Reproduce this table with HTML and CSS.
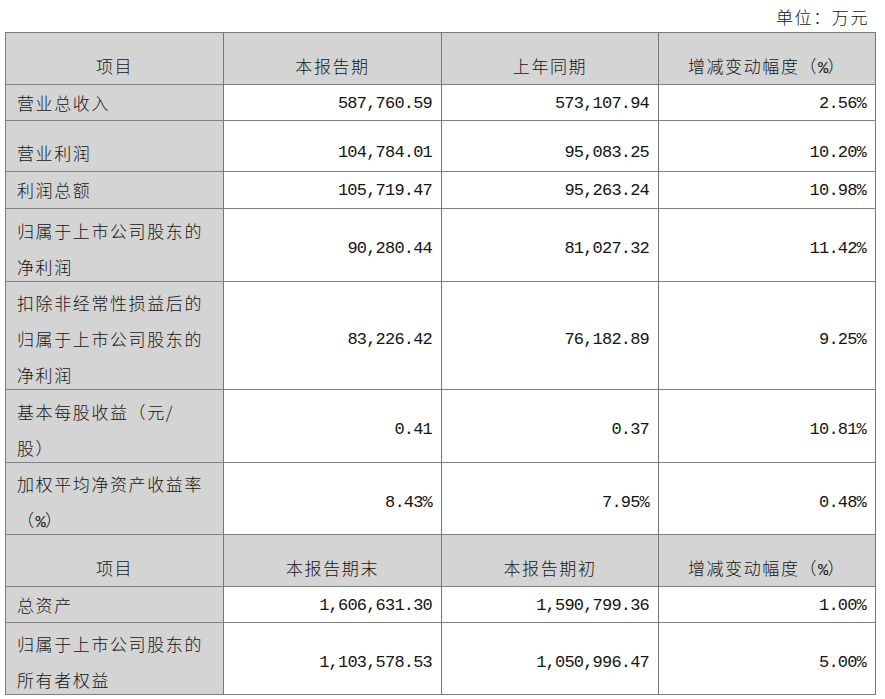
FILE: index.html
```html
<!DOCTYPE html>
<html lang="zh-CN">
<head>
<meta charset="utf-8">
<title>主要财务数据</title>
<link rel="stylesheet" href="styles.css">
</head>
<body>
<div class="page">
  <div class="unit">单位：万元</div>
  <div class="fin" role="table">
    <div class="cell head"><span>项目</span></div>
    <div class="cell head"><span>本报告期</span></div>
    <div class="cell head"><span>上年同期</span></div>
    <div class="cell head"><span>增减变动幅度（<span class="n">%</span>）</span></div>

    <div class="cell lbl"><span>营业总收入</span></div>
    <div class="cell num"><span>587,760.59</span></div>
    <div class="cell num"><span>573,107.94</span></div>
    <div class="cell num"><span>2.56%</span></div>

    <div class="cell lbl low"><span>营业利润</span></div>
    <div class="cell num low"><span>104,784.01</span></div>
    <div class="cell num low"><span>95,083.25</span></div>
    <div class="cell num low"><span>10.20%</span></div>

    <div class="cell lbl"><span>利润总额</span></div>
    <div class="cell num"><span>105,719.47</span></div>
    <div class="cell num"><span>95,263.24</span></div>
    <div class="cell num"><span>10.98%</span></div>

    <div class="cell lbl multi"><span>归属于上市公司股东的<br>净利润</span></div>
    <div class="cell num multi"><span>90,280.44</span></div>
    <div class="cell num multi"><span>81,027.32</span></div>
    <div class="cell num multi"><span>11.42%</span></div>

    <div class="cell lbl multi"><span>扣除非经常性损益后的<br>归属于上市公司股东的<br>净利润</span></div>
    <div class="cell num multi"><span>83,226.42</span></div>
    <div class="cell num multi"><span>76,182.89</span></div>
    <div class="cell num multi"><span>9.25%</span></div>

    <div class="cell lbl multi"><span>基本每股收益（元/<br>股）</span></div>
    <div class="cell num multi"><span>0.41</span></div>
    <div class="cell num multi"><span>0.37</span></div>
    <div class="cell num multi"><span>10.81%</span></div>

    <div class="cell lbl multi"><span>加权平均净资产收益率<br>（<span class="n">%</span>）</span></div>
    <div class="cell num multi"><span>8.43%</span></div>
    <div class="cell num multi"><span>7.95%</span></div>
    <div class="cell num multi"><span>0.48%</span></div>

    <div class="cell head"><span>项目</span></div>
    <div class="cell head"><span>本报告期末</span></div>
    <div class="cell head"><span>本报告期初</span></div>
    <div class="cell head"><span>增减变动幅度（<span class="n">%</span>）</span></div>

    <div class="cell lbl"><span>总资产</span></div>
    <div class="cell num"><span>1,606,631.30</span></div>
    <div class="cell num"><span>1,590,799.36</span></div>
    <div class="cell num"><span>1.00%</span></div>

    <div class="cell lbl multi"><span>归属于上市公司股东的<br>所有者权益</span></div>
    <div class="cell num multi"><span>1,103,578.53</span></div>
    <div class="cell num multi"><span>1,050,996.47</span></div>
    <div class="cell num multi"><span>5.00%</span></div>
  </div>
</div>
</body>
</html>
```

FILE: styles.css
```css
html, body {
  margin: 0;
  padding: 0;
  background: #ffffff;
}

body {
  font-family: "Noto Sans CJK SC", "Liberation Serif", serif;
  color: #141414;
}

.page {
  width: 871px;
  margin-left: 5px;
}

.unit {
  height: 32px;
  line-height: 34px;
  text-align: right;
  padding-right: 7px;
  font-size: 17px;
  letter-spacing: 1.6px;
  font-weight: 300;
}

.fin {
  display: grid;
  grid-template-columns: 218px 218px 217px 217px;
  grid-template-rows: 52px 36px 51px 37px 73px 108px 73px 72px 52px 36px 72px;
  border-top: 1px solid #7a7a7a;
  border-left: 1px solid #7a7a7a;
  width: 871px;
  box-sizing: border-box;
}

.cell {
  box-sizing: border-box;
  border-right: 1px solid #777777;
  border-bottom: 1px solid #808080;
  display: flex;
  flex-direction: column;
  justify-content: center;
  padding: 0 9px 0 11px;
  font-size: 17px;
  line-height: 36px;
  letter-spacing: 1.6px;
  font-weight: 300;
  white-space: nowrap;
  background: #ffffff;
}

.lbl {
  background: #d4d4d4;
  align-items: flex-start;
}

.head {
  background: #d4d4d4;
  align-items: center;
  justify-content: flex-end;
  padding-left: 0;
  padding-right: 0;
}

.low {
  justify-content: flex-end;
}

.multi {
  padding-top: 7px;
}

.num {
  align-items: flex-end;
  font-family: "Liberation Mono", monospace;
  letter-spacing: -0.8px;
  font-weight: 400;
  padding-top: 2px;
}

.num.multi {
  padding-top: 8px;
}

.num.low {
  padding-top: 0;
}

.n {
  font-family: "Liberation Mono", monospace;
  letter-spacing: -0.8px;
  font-weight: 400;
  line-height: 0;
}
```
